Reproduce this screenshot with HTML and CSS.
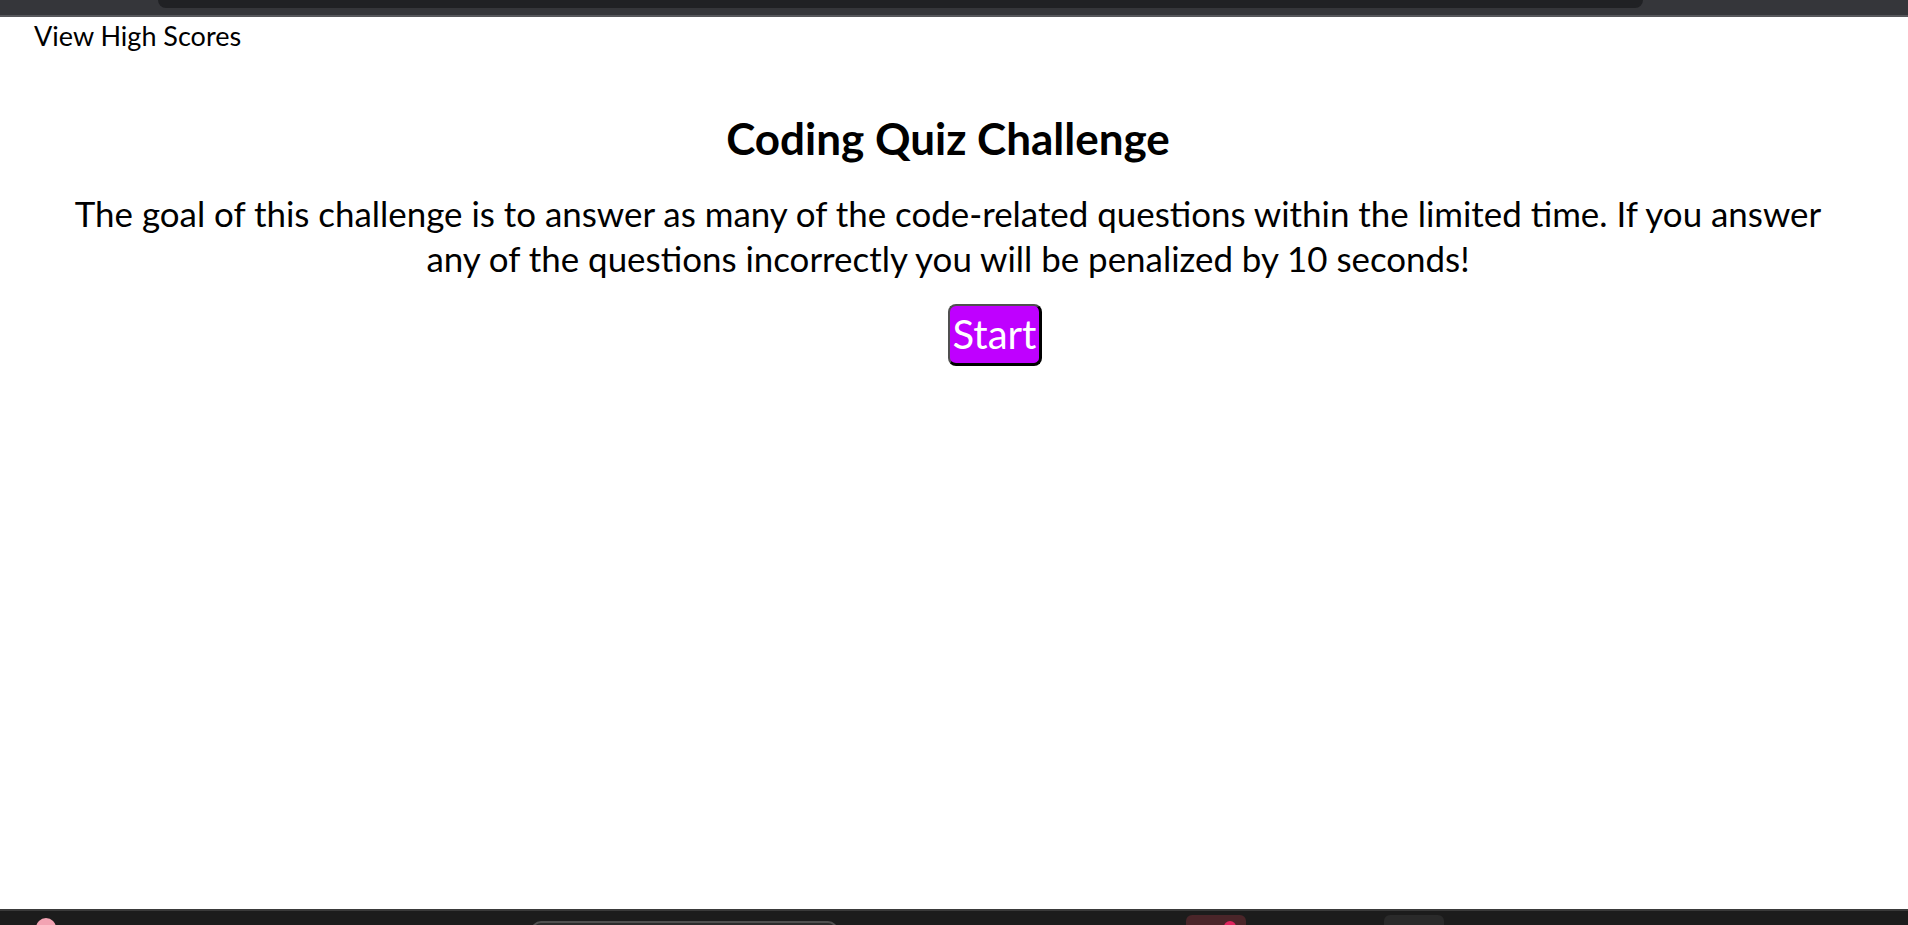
FILE: index.html
```html
<!DOCTYPE html>
<html lang="en">
<head>
<meta charset="utf-8">
<title>Coding Quiz Challenge</title>
<link rel="stylesheet" href="styles.css">
</head>
<body>
<div class="screen">
  <div class="chrome"><div class="tab"></div></div>
  <div class="page">
    <div class="nav">View High Scores</div>
    <main class="intro">
      <h1 class="title">Coding Quiz Challenge</h1>
      <p class="desc">The goal of this challenge is to answer as many of the code-related questions within the limited time. If you answer any of the questions incorrectly you will be penalized by 10 seconds!</p>
      <div class="actions"><button class="start">Start</button></div>
    </main>
  </div>
  <div class="taskbar">
    <div class="tb-blob"></div>
    <div class="tb-field"></div>
    <div class="tb-app tb-red"><span class="tb-dot"></span></div>
    <div class="tb-app tb-gray"></div>
  </div>
</div>
</body>
</html>
```
FILE: styles.css
```css
html, body {
  margin: 0;
  padding: 0;
}
body {
  font-family: Lato, "Open Sans", sans-serif;
  color: #000;
  background: #fff;
}
.screen {
  height: 925px;
  display: flex;
  flex-direction: column;
  overflow: hidden;
}
.chrome {
  height: 15px;
  flex: none;
  background: #35363a;
  border-bottom: 2px solid #56575b;
  display: flex;
}
.tab {
  margin-left: 158px;
  width: 1485px;
  height: 8px;
  background: #202124;
  border-radius: 0 0 10px 10px;
}
.page {
  flex: 1;
  background: #fff;
}
.nav {
  padding: 3px 0 0 34px;
  font-size: 27px;
  line-height: 1.2;
}
.intro {
  padding: 0 62px 0 50px;
  text-align: center;
}
.title {
  margin: 60px 0 0;
  font-size: 44px;
  font-weight: 700;
  line-height: 1.2;
}
.desc {
  margin: 26px 0 0;
  font-size: 34.9px;
  line-height: 45px;
}
.actions {
  margin-top: 23px;
}
.start {
  margin-left: 94px;
  font-family: Lato, "Open Sans", sans-serif;
  font-size: 40px;
  line-height: 1.2;
  color: #fff;
  background: #bf00ff;
  padding: 4px 3px 5px;
  border-style: solid;
  border-width: 2px 3px 3px 2px;
  border-color: #505050 #000 #000 #505050;
  border-radius: 8px;
  cursor: pointer;
}
.taskbar {
  height: 14px;
  flex: none;
  background: #1c1c1c;
  border-top: 2px solid #3a3a3a;
  display: flex;
  align-items: flex-start;
  overflow: hidden;
}
.tb-blob {
  margin: 7px 0 0 36px;
  width: 20px;
  height: 20px;
  border-radius: 50%;
  background: #f3a3b3;
}
.tb-field {
  margin: 10px 0 0 475px;
  width: 303px;
  height: 20px;
  background: #2b2b2b;
  border: 2px solid #505050;
  border-radius: 10px 10px 0 0;
}
.tb-app {
  margin-top: 4px;
  width: 60px;
  height: 20px;
  border-radius: 6px;
  position: relative;
}
.tb-red {
  margin-left: 348px;
  background: #4a2529;
}
.tb-gray {
  margin-left: 138px;
  background: #2a2a2a;
}
.tb-dot {
  position: absolute;
  left: 38px;
  top: 6px;
  width: 12px;
  height: 12px;
  border-radius: 50%;
  background: #e0245e;
}
```
